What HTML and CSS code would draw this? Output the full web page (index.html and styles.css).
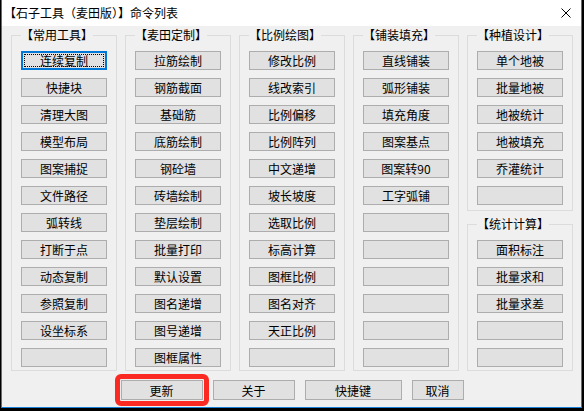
FILE: index.html
```html
<!DOCTYPE html>
<html lang="zh-CN">
<head>
  <meta charset="UTF-8">
  <title>命令列表</title>
  <link rel="stylesheet" href="styles.css">
</head>
<body>

<div class="window">
  <div class="titlebar">
    <span class="title">【石子工具（麦田版）】命令列表</span>
    <svg class="close" width="10" height="10" viewBox="0 0 10 10">
      <path d="M0.5 0.5 L9.5 9.5 M9.5 0.5 L0.5 9.5" stroke="#000" stroke-width="1" fill="none"/>
    </svg>
  </div>

  <div class="client">
    <div class="columns">

      <div class="col">
        <div class="group">
          <div class="group-title">【常用工具】</div>
          <div class="btns">
            <button class="btn focused">连续复制</button>
            <button class="btn">快捷块</button>
            <button class="btn">清理大图</button>
            <button class="btn">模型布局</button>
            <button class="btn">图案捕捉</button>
            <button class="btn">文件路径</button>
            <button class="btn">弧转线</button>
            <button class="btn">打断于点</button>
            <button class="btn">动态复制</button>
            <button class="btn">参照复制</button>
            <button class="btn">设坐标系</button>
            <button class="btn"></button>
          </div>
        </div>
      </div>

      <div class="col">
        <div class="group">
          <div class="group-title">【麦田定制】</div>
          <div class="btns">
            <button class="btn">拉筋绘制</button>
            <button class="btn">钢筋截面</button>
            <button class="btn">基础筋</button>
            <button class="btn">底筋绘制</button>
            <button class="btn">钢砼墙</button>
            <button class="btn">砖墙绘制</button>
            <button class="btn">垫层绘制</button>
            <button class="btn">批量打印</button>
            <button class="btn">默认设置</button>
            <button class="btn">图名递增</button>
            <button class="btn">图号递增</button>
            <button class="btn">图框属性</button>
          </div>
        </div>
      </div>

      <div class="col">
        <div class="group">
          <div class="group-title">【比例绘图】</div>
          <div class="btns">
            <button class="btn">修改比例</button>
            <button class="btn">线改索引</button>
            <button class="btn">比例偏移</button>
            <button class="btn">比例阵列</button>
            <button class="btn">中文递增</button>
            <button class="btn">坡长坡度</button>
            <button class="btn">选取比例</button>
            <button class="btn">标高计算</button>
            <button class="btn">图框比例</button>
            <button class="btn">图名对齐</button>
            <button class="btn">天正比例</button>
            <button class="btn"></button>
          </div>
        </div>
      </div>

      <div class="col">
        <div class="group">
          <div class="group-title">【铺装填充】</div>
          <div class="btns">
            <button class="btn">直线铺装</button>
            <button class="btn">弧形铺装</button>
            <button class="btn">填充角度</button>
            <button class="btn">图案基点</button>
            <button class="btn">图案转90</button>
            <button class="btn">工字弧铺</button>
            <button class="btn"></button>
            <button class="btn"></button>
            <button class="btn"></button>
            <button class="btn"></button>
            <button class="btn"></button>
            <button class="btn"></button>
          </div>
        </div>
      </div>

      <div class="col">
        <div class="group grow">
          <div class="group-title">【种植设计】</div>
          <div class="btns">
            <button class="btn">单个地被</button>
            <button class="btn">批量地被</button>
            <button class="btn">地被统计</button>
            <button class="btn">地被填充</button>
            <button class="btn">乔灌统计</button>
            <button class="btn"></button>
          </div>
        </div>
        <div class="group">
          <div class="group-title">【统计计算】</div>
          <div class="btns">
            <button class="btn">面积标注</button>
            <button class="btn">批量求和</button>
            <button class="btn">批量求差</button>
            <button class="btn"></button>
            <button class="btn"></button>
          </div>
        </div>
      </div>

    </div>

    <!-- 底部按钮 -->
    <div class="actions">
      <span class="mark"><button class="btn wide82">更新</button></span>
      <button class="btn wide82">关于</button>
      <button class="btn wide97">快捷键</button>
      <button class="btn wide52">取消</button>
    </div>
  </div>
</div>

</body>
</html>
```

FILE: styles.css
```css
body {
  margin: 0;
  background: #000;
  font-family: "Noto Sans CJK SC", "Noto Sans", sans-serif;
  font-size: 12px;
  color: #000;
}

.window {
  margin: 0 2px 2px 1px;
  height: 408px;
  box-sizing: border-box;
  border: 1px solid #1a7fd6;
  border-top: 0;
  background: #f0f0f0;
  display: flex;
  flex-direction: column;
}

.titlebar {
  height: 26px;
  flex-shrink: 0;
  background: #fff;
  display: flex;
  align-items: center;
  padding-left: 2px;
}

.title {
  line-height: 14px;
}

.close {
  margin-left: auto;
  margin-right: 10px;
}

.client {
  flex: 1;
  padding: 9px 8px 0 9px;
  display: flex;
  flex-direction: column;
}

.columns {
  display: flex;
  gap: 8px;
}

.col {
  width: 106px;
  display: flex;
  flex-direction: column;
  gap: 13px;
}

.group {
  border: 1px solid #dcdcdc;
  padding: 0 9px 3px;
  display: flex;
  flex-direction: column;
}

.group.grow {
  flex: 1;
}

/* 标题压在边框上 */
.group-title {
  align-self: flex-start;
  margin-top: -8px;
  line-height: 14px;
  background: #f0f0f0;
  white-space: nowrap;
}

.btns {
  margin-top: 9px;
  display: flex;
  flex-direction: column;
  gap: 8px;
}

.btn {
  display: block;
  box-sizing: border-box;
  width: 86px;
  height: 19px;
  padding: 0;
  margin: 0;
  border: 1px solid #adadad;
  background: #e1e1e1;
  font-family: inherit;
  font-size: 12px;
  line-height: 16px;
  color: #000;
  text-align: center;
}

.btn.focused {
  border-color: #0078d7;
  box-shadow: inset 0 0 0 1px #0078d7;
  outline: 1px dotted #000;
  outline-offset: -4px;
}

.actions {
  margin-top: 9px;
  display: flex;
  justify-content: center;
  gap: 10px;
}

.actions .btn {
  height: 20px;
  line-height: 17px;
}

.wide82 { width: 82px !important; }
.wide97 { width: 97px !important; }
.wide52 { width: 52px !important; }

/* 红色标注框 */
.mark {
  display: block;
  margin: -6px;
  padding: 1px;
  border: 5px solid #fa2a22;
  border-radius: 6px;
}
```
